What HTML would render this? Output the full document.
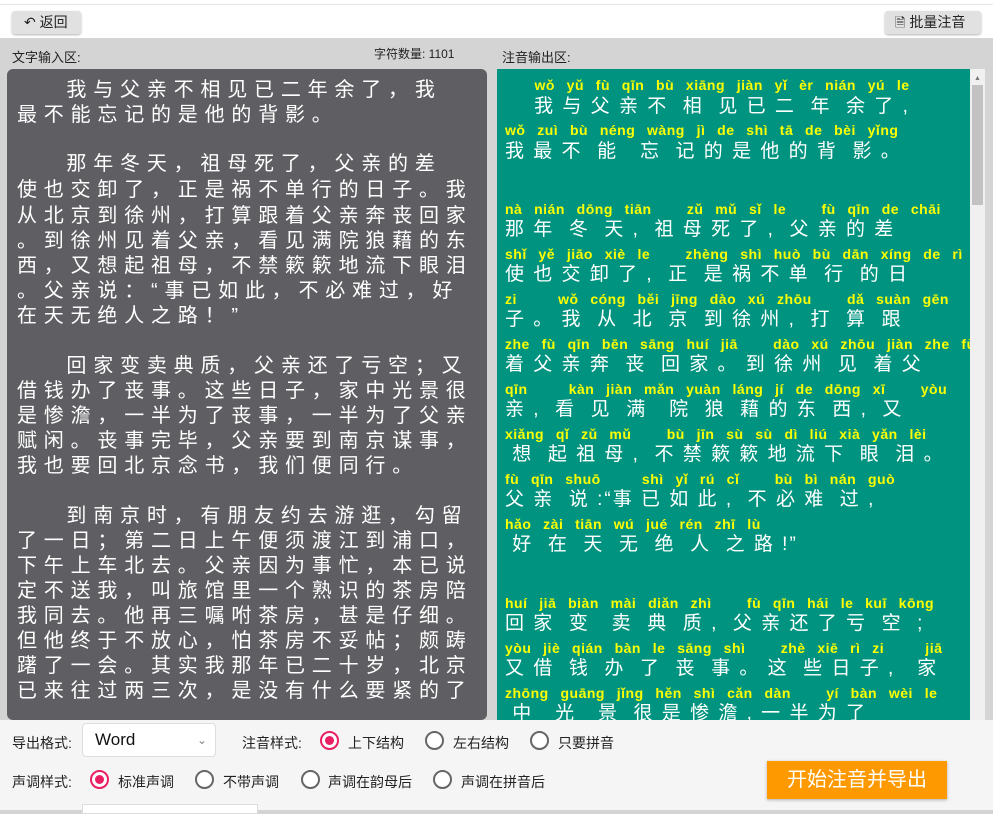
<!DOCTYPE html>
<html><head><meta charset="utf-8"><style>
*{margin:0;padding:0;box-sizing:border-box}
body{width:993px;height:810px;overflow:hidden;background:#d4d4d4;font-family:"Liberation Sans","Noto Sans CJK SC",sans-serif;position:relative}
.top{position:absolute;left:0;top:0;width:993px;height:38px;background:#fff}
.top:before{content:"";position:absolute;left:0;right:0;top:4px;height:1px;background:#e6e6e6}
.btn{position:absolute;top:11px;height:23px;background:#e1e1e1;border-radius:3px;box-shadow:0 1px 2px rgba(0,0,0,.3);font-size:14px;color:#222;line-height:23px}
.lbl{position:absolute;font-size:13px;color:#222}
.left{position:absolute;left:7px;top:69px;width:480px;height:651px;background:#5f5f63;border-radius:6px;overflow:hidden}
.left div{position:absolute;left:10px;font-size:20px;color:#fff;letter-spacing:6.8px;white-space:pre;line-height:25px}
.right{position:absolute;left:497px;top:69px;width:473px;height:651px;background:#009480;overflow:hidden}
.right .p{position:absolute;left:8px;font-size:14px;font-weight:bold;color:#ffff00;white-space:pre;line-height:16px;letter-spacing:.5px;word-spacing:1.5px}
.right .c{position:absolute;left:8px;font-size:19px;color:#fff;white-space:pre;line-height:22px;letter-spacing:2px}
.sb{position:absolute;left:970px;top:69px;width:15px;height:651px;background:#f0f0f0}
.bottom{position:absolute;left:0;top:720px;width:993px;height:90px;background:#f5f5f5}
.t{position:absolute;font-size:14px;color:#222}
.r{position:absolute;width:19px;height:19px;border-radius:50%;border:2px solid #666;background:#fff}
.r.on{border-color:#e91e63}
.r.on:after{content:"";position:absolute;left:3px;top:3px;width:9px;height:9px;border-radius:50%;background:#e91e63}
</style></head><body>
<div class="top">
<div class="btn" style="left:12px;width:69px;padding-left:12px">↶ 返回</div>
<div class="btn" style="left:885px;width:96px;padding-left:10px"><span style="font-size:13px">🗎</span> 批量注音</div>
</div>
<div class="lbl" style="left:12px;top:47px">文字输入区:</div>
<div class="lbl" style="left:374px;top:45px;font-size:12px">字符数量: 1101</div>
<div class="lbl" style="left:502px;top:47px">注音输出区:</div>
<div class="left">
<div style="top:9px">    我与父亲不相见已二年余了，我</div>
<div style="top:34px">最不能忘记的是他的背影。</div>
<div style="top:83px">    那年冬天，祖母死了，父亲的差</div>
<div style="top:109px">使也交卸了，正是祸不单行的日子。我</div>
<div style="top:135px">从北京到徐州，打算跟着父亲奔丧回家</div>
<div style="top:160px">。到徐州见着父亲，看见满院狼藉的东</div>
<div style="top:185px">西，又想起祖母，不禁簌簌地流下眼泪</div>
<div style="top:210px">。父亲说：“事已如此，不必难过，好</div>
<div style="top:235px">在天无绝人之路！”</div>
<div style="top:285px">    回家变卖典质，父亲还了亏空；又</div>
<div style="top:310px">借钱办了丧事。这些日子，家中光景很</div>
<div style="top:335px">是惨澹，一半为了丧事，一半为了父亲</div>
<div style="top:360px">赋闲。丧事完毕，父亲要到南京谋事，</div>
<div style="top:385px">我也要回北京念书，我们便同行。</div>
<div style="top:435px">    到南京时，有朋友约去游逛，勾留</div>
<div style="top:460px">了一日；第二日上午便须渡江到浦口，</div>
<div style="top:485px">下午上车北去。父亲因为事忙，本已说</div>
<div style="top:510px">定不送我，叫旅馆里一个熟识的茶房陪</div>
<div style="top:535px">我同去。他再三嘱咐茶房，甚是仔细。</div>
<div style="top:560px">但他终于不放心，怕茶房不妥帖；颇踌</div>
<div style="top:585px">躇了一会。其实我那年已二十岁，北京</div>
<div style="top:610px">已来往过两三次，是没有什么要紧的了</div>
</div>
<div class="right">
<div class="p" style="top:8px">     wǒ  yǔ  fù  qīn  bù  xiāng  jiàn  yǐ  èr  nián  yú  le</div>
<div class="c" style="top:27px">    我 与 父 亲 不  相  见 已 二  年  余 了 ,</div>
<div class="p" style="top:53px">wǒ  zuì  bù  néng  wàng  jì  de  shì  tā  de  bèi  yǐng</div>
<div class="c" style="top:72px">我 最 不  能   忘  记 的 是 他 的 背  影 。</div>
<div class="p" style="top:132px">nà  nián  dōng  tiān      zǔ  mǔ  sǐ  le      fù  qīn  de  chāi</div>
<div class="c" style="top:150px">那 年  冬  天 ,  祖 母 死 了 ,  父 亲 的 差</div>
<div class="p" style="top:177px">shǐ  yě  jiāo  xiè  le      zhèng  shì  huò  bù  dān  xíng  de  rì</div>
<div class="c" style="top:195px">使 也 交 卸 了 ,  正  是 祸 不 单  行  的 日</div>
<div class="p" style="top:222px">zi       wǒ  cóng  běi  jīng  dào  xú  zhōu      dǎ  suàn  gēn</div>
<div class="c" style="top:240px">子 。 我  从  北  京  到 徐 州 ,  打  算  跟</div>
<div class="p" style="top:267px">zhe  fù  qīn  bēn  sāng  huí  jiā      dào  xú  zhōu  jiàn  zhe  fù</div>
<div class="c" style="top:285px">着 父 亲 奔  丧  回 家 。 到 徐 州  见  着 父</div>
<div class="p" style="top:312px">qīn       kàn  jiàn  mǎn  yuàn  láng  jí  de  dōng  xī      yòu</div>
<div class="c" style="top:330px">亲 ,  看  见  满   院  狼  藉 的 东  西 ,  又</div>
<div class="p" style="top:357px">xiǎng  qǐ  zǔ  mǔ      bù  jīn  sù  sù  dì  liú  xià  yǎn  lèi</div>
<div class="c" style="top:375px"> 想  起 祖 母 ,  不 禁 簌 簌 地 流 下  眼  泪 。</div>
<div class="p" style="top:402px">fù  qīn  shuō       shì  yǐ  rú  cǐ      bù  bì  nán  guò</div>
<div class="c" style="top:420px">父 亲  说 :“事 已 如 此 ,  不 必 难  过 ,</div>
<div class="p" style="top:447px">hǎo  zài  tiān  wú  jué  rén  zhī  lù</div>
<div class="c" style="top:465px"> 好  在  天  无  绝  人  之 路 !”</div>
<div class="p" style="top:526px">huí  jiā  biàn  mài  diǎn  zhì      fù  qīn  hái  le  kuī  kōng</div>
<div class="c" style="top:544px">回 家  变   卖  典  质 ,  父 亲 还 了 亏  空  ;</div>
<div class="p" style="top:571px">yòu  jiè  qián  bàn  le  sāng  shì      zhè  xiē  rì  zi       jiā</div>
<div class="c" style="top:589px">又 借  钱  办  了  丧  事 。 这  些 日 子 ,   家</div>
<div class="p" style="top:616px">zhōng  guāng  jǐng  hěn  shì  cǎn  dàn      yí  bàn  wèi  le</div>
<div class="c" style="top:634px"> 中   光   景  很 是 惨 澹 , 一 半 为 了</div>
</div>
<div class="sb"><div style="position:absolute;left:2px;top:16px;width:11px;height:120px;background:#c2c2c2"></div><div style="position:absolute;left:4px;top:6px;font-size:7px;color:#777">▲</div></div>
<div class="bottom">
<div class="t" style="left:12px;top:13px">导出格式:</div>
<div style="position:absolute;left:82px;top:3px;width:134px;height:34px;background:#fff;border:1px solid #ddd;border-radius:4px;font-size:17px;line-height:32px;padding-left:12px;color:#111">Word<span style="position:absolute;right:8px;font-size:12px;color:#888">⌄</span></div>
<div class="t" style="left:242px;top:13px">注音样式:</div>
<div class="r on" style="left:320px;top:11px"></div><div class="t" style="left:348px;top:13px">上下结构</div>
<div class="r" style="left:425px;top:11px"></div><div class="t" style="left:453px;top:13px">左右结构</div>
<div class="r" style="left:530px;top:11px"></div><div class="t" style="left:558px;top:13px">只要拼音</div>
<div class="t" style="left:12px;top:52px">声调样式:</div>
<div class="r on" style="left:90px;top:50px"></div><div class="t" style="left:118px;top:52px">标准声调</div>
<div class="r" style="left:195px;top:50px"></div><div class="t" style="left:223px;top:52px">不带声调</div>
<div class="r" style="left:301px;top:50px"></div><div class="t" style="left:328px;top:52px">声调在韵母后</div>
<div class="r" style="left:433px;top:50px"></div><div class="t" style="left:461px;top:52px">声调在拼音后</div>
<div style="position:absolute;left:767px;top:41px;width:180px;height:38px;background:#ff9900;color:#fff;font-size:20px;line-height:38px;text-align:center;box-shadow:0 1px 3px rgba(0,0,0,.3)">开始注音并导出</div>
<div style="position:absolute;left:82px;top:84px;width:176px;height:10px;background:#fff;border:1px solid #ddd"></div>
</div>
</body></html>
